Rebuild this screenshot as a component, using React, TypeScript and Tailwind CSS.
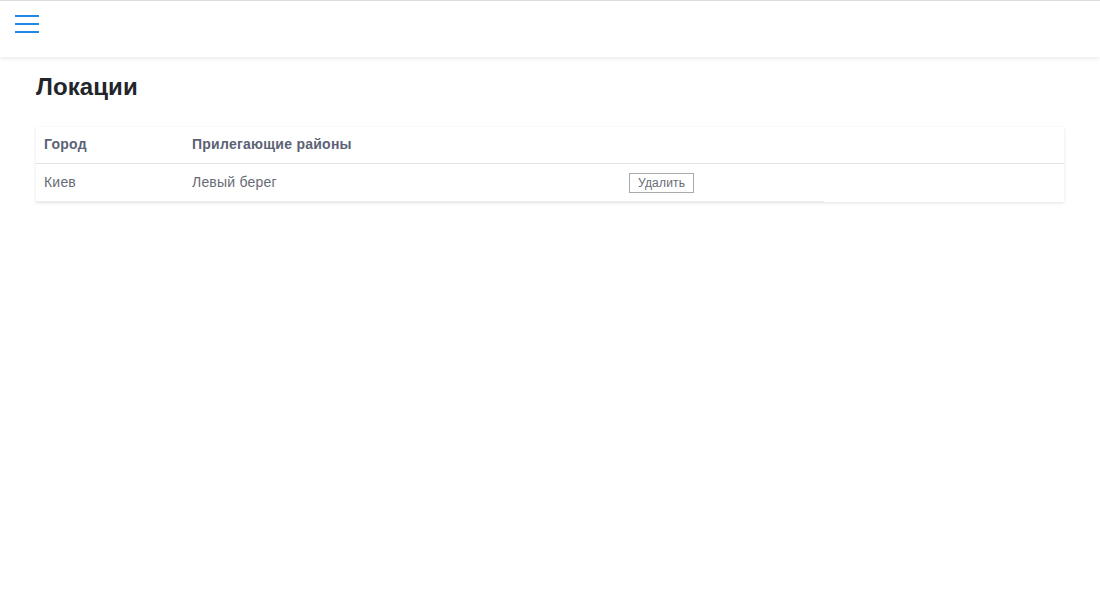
export default function App() {
  const rows = [{ city: 'Киев', districts: 'Левый берег' }];

  return (
    <div className="min-h-[601px] bg-white font-['Liberation_Sans',Arial,sans-serif]">
      {/* top bar */}
      <header className="h-[57px] border-t border-[#dcdcdc] bg-white shadow-[0_2px_4px_rgba(0,0,0,0.08)] flex items-start">
        <button className="ml-[15px] mt-[14px] flex flex-col gap-[6px] w-[24px]">
          <span className="block h-[2px] w-[24px] bg-[#1e88e5]" />
          <span className="block h-[2px] w-[24px] bg-[#1e88e5]" />
          <span className="block h-[2px] w-[24px] bg-[#1e88e5]" />
        </button>
      </header>

      <main className="px-[36px]">
        <h1 className="mt-[14px] text-[24px] leading-[32px] font-bold tracking-[0.1px] text-[#222529]">Локации</h1>

        <div className="mt-[24px] bg-white shadow-[0_1px_3px_rgba(0,0,0,0.12)]">
          <div className="flex h-[37px] items-center border-b border-[#e3e3e3] text-[14px] font-bold tracking-[0.25px] text-[#5c6275]">
            <div className="w-[148px] pl-[8px] -mt-[1px]">Город</div>
            <div className="pl-[8px] -mt-[1px]">Прилегающие районы</div>
          </div>
          {rows.map((r) => (
            <div key={r.city} className="relative flex h-[38px] items-center text-[14px] tracking-[0.2px] text-[#666b73]">
              <div className="w-[148px] pl-[8px] -mt-[2px]">{r.city}</div>
              <div className="w-[445px] pl-[8px] -mt-[2px]">{r.districts}</div>
              <div className="-mt-[1px]">
                <button className="h-[20px] border border-[#a9a9b0] px-[8px] text-[12px] leading-[18px] text-[#666b73]">
                  Удалить
                </button>
              </div>
              <div className="absolute bottom-0 left-0 h-[1px] w-[788px] bg-[#ececec]" />
            </div>
          ))}
        </div>
      </main>
    </div>
  );
}
